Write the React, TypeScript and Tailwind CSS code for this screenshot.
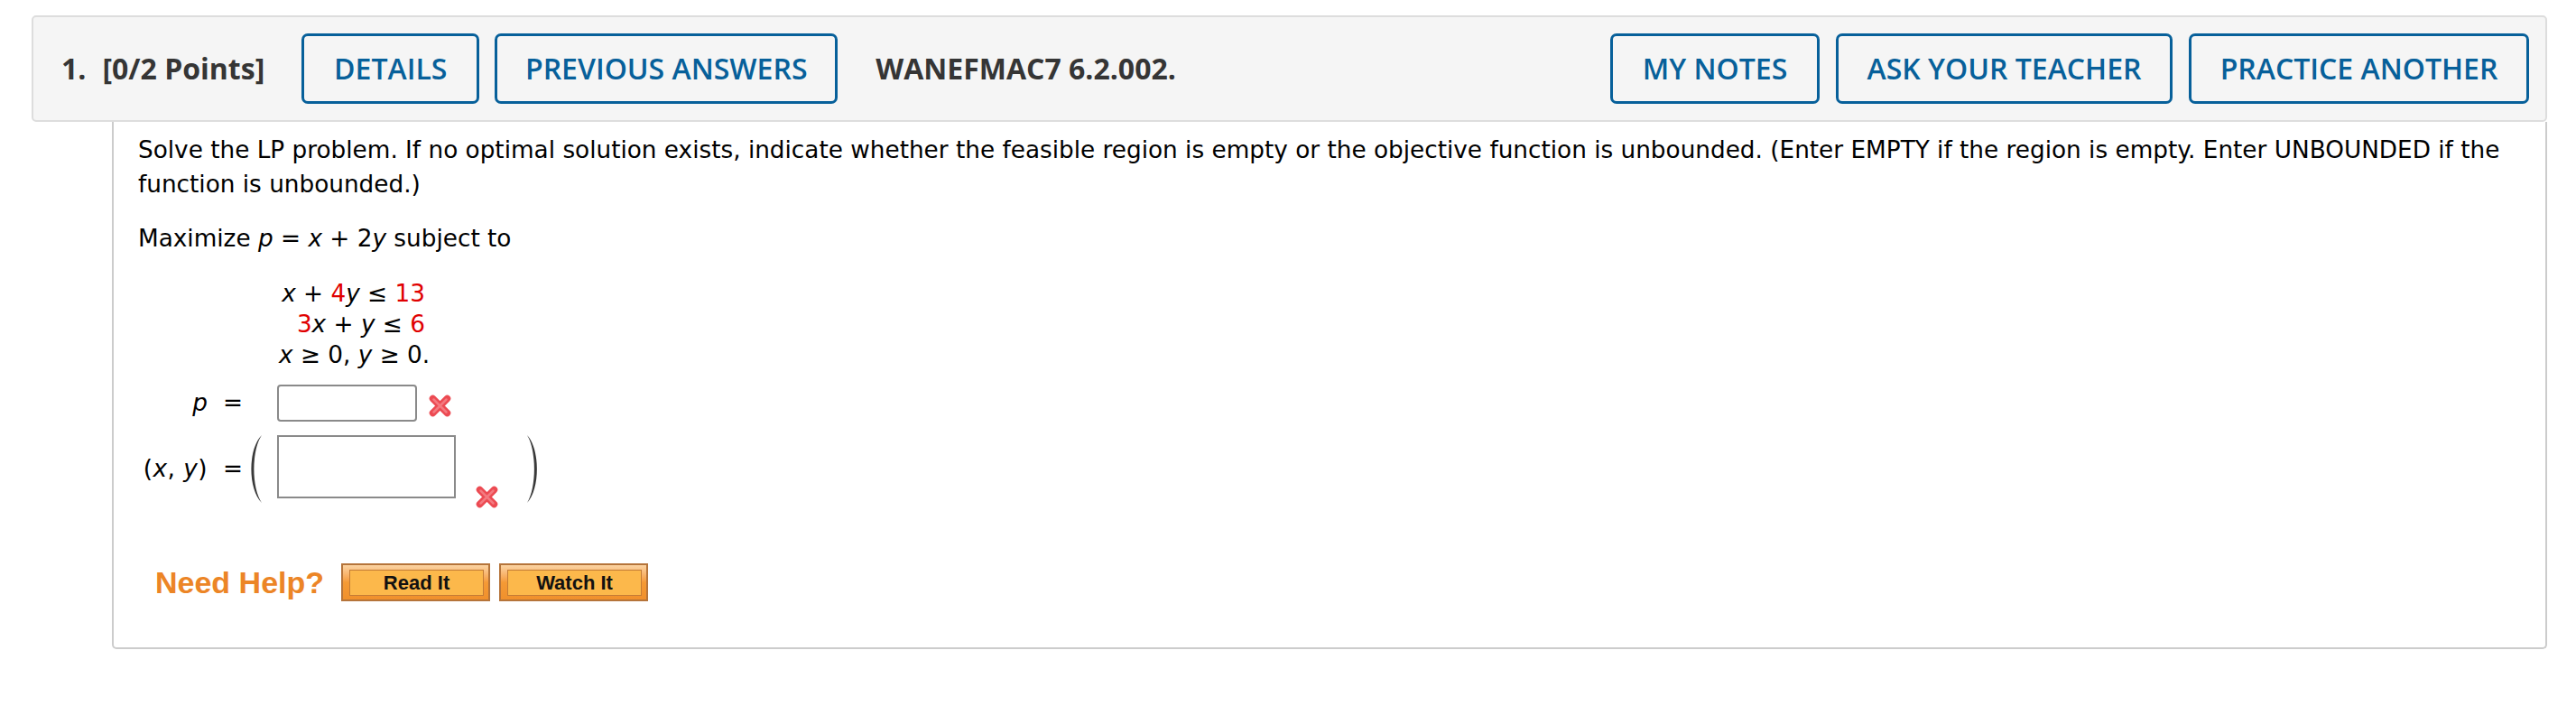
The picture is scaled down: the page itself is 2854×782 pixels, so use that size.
import React from "react";

function Btn({ w, className = "", children }: { w: string; className?: string; children: React.ReactNode }) {
  return (
    <div
      className={
        "h-[78px] flex items-center justify-center border-[3px] border-[#07609a] rounded-[7px] text-[#07609a] font-semibold whitespace-nowrap " +
        w +
        " " +
        className
      }
    >
      {children}
    </div>
  );
}

function RedX() {
  return (
    <svg width="25" height="25" viewBox="0 0 25 25" className="block">
      <g strokeLinecap="round">
        <path d="M4.5 4.5 L20.5 20.5 M20.5 4.5 L4.5 20.5" stroke="#ec4a52" strokeWidth="7.5" />
        <path d="M5.5 5.5 L19.5 19.5 M19.5 5.5 L5.5 19.5" stroke="#f47a80" strokeWidth="2.5" />
      </g>
    </svg>
  );
}

function HelpBtn({ children }: { children: React.ReactNode }) {
  return (
    <div className="w-[165px] h-[42px] border-2 border-[#b5743a] bg-gradient-to-b from-[#fbd3a1] via-[#f59a35] to-[#f0902c] pl-[7px] pr-[5px] pt-[5px] pb-[4px]">
      <div className="w-full h-full border border-[#c47c36] bg-[#fcb84b] flex items-center justify-center font-['Liberation_Sans',Arial,sans-serif] font-bold text-[22px] text-[#111] leading-none">
        {children}
      </div>
    </div>
  );
}

export default function App() {
  return (
    <div className="w-[2854px] h-[782px] bg-white pt-[17px] pl-[35px] pr-[32px]">
      <div className="flex items-center h-[118px] border-2 border-[#dddddd] rounded-[5px] bg-[#f5f5f5] pl-[31px] pr-[18px] font-['Open_Sans',sans-serif] text-[32px]">
        <span className="font-bold text-[#353535]">1.</span>
        <span className="font-bold text-[#353535] ml-[18px]">[0/2 Points]</span>
        <Btn w="w-[197px]" className="ml-[41px]">DETAILS</Btn>
        <Btn w="w-[380px]" className="ml-[17px]">PREVIOUS ANSWERS</Btn>
        <span className="ml-[42px] font-bold text-[#353535]">WANEFMAC7 6.2.002.</span>
        <div className="flex-1" />
        <Btn w="w-[232px]">MY NOTES</Btn>
        <Btn w="w-[373px]" className="ml-[18px]">ASK YOUR TEACHER</Btn>
        <Btn w="w-[377px]" className="ml-[18px]">PRACTICE ANOTHER</Btn>
      </div>

      <div className="ml-[89px] h-[584px] border-2 border-t-0 border-[#cccccc] rounded-b-[5px] pl-[27px] pt-[12px] font-['DejaVu_Sans',Verdana,sans-serif] text-[26.3px] text-black">
        <p className="leading-[38px] whitespace-nowrap">
          Solve the LP problem. If no optimal solution exists, indicate whether the feasible region is empty or the objective
          function is unbounded. (Enter EMPTY if the region is empty. Enter UNBOUNDED if the
          <br />
          function is unbounded.)
        </p>

        <p className="mt-[24px] leading-[34px] whitespace-nowrap">
          Maximize <i>p</i> = <i>x</i> + 2<i>y</i> subject to
        </p>

        <div className="mt-[27px] ml-[156px] w-[162px] leading-[34px] whitespace-nowrap">
          <div className="text-right">
            <i>x</i> + <span className="text-[#e00000]">4</span>
            <i>y</i> ≤ <span className="text-[#e00000]">13</span>
          </div>
          <div className="text-right">
            <span className="text-[#e00000]">3</span>
            <i>x</i> + <i>y</i> ≤ <span className="text-[#e00000]">6</span>
          </div>
          <div>
            <i>x</i> ≥ 0, <i>y</i> ≥ 0.
          </div>
        </div>

        <div className="mt-[16px] flex items-center h-[41px]">
          <div className="w-[77px] text-right leading-none">
            <i>p</i>
          </div>
          <div className="ml-[17px] w-[15px] leading-none">=</div>
          <div className="ml-[45px] w-[155px] h-[41px] border-2 border-[#8a8a8a] rounded-[4px] bg-white" />
          <div className="ml-[13px] mt-[6px]">
            <RedX />
          </div>
        </div>

        <div className="mt-[15px] flex items-start">
          <div className="h-[75px] flex items-center">
            <div className="w-[77px] text-right leading-none whitespace-nowrap tracking-[0.5px]">
              (<i>x</i>, <i>y</i>)
            </div>
            <div className="ml-[17px] w-[15px] leading-none">=</div>
          </div>
          <svg width="18" height="75" viewBox="0 0 18 75" className="ml-[11px] block">
            <path d="M17 0 C1.5 15 1.5 60 17 75 C5.5 58 5.5 17 17 0 Z" fill="#3a3a3a" />
          </svg>
          <div className="ml-[16px] w-[198px] h-[70px] border-2 border-[#8a8a8a] bg-white" />
          <div className="ml-[22px] mt-[56px]">
            <RedX />
          </div>
          <svg width="16" height="75" viewBox="0 0 16 75" className="ml-[31px] block">
            <path d="M1 0 C15.5 15 15.5 60 1 75 C11.5 58 11.5 17 1 0 Z" fill="#3a3a3a" />
          </svg>
        </div>

        <div className="mt-[61px] flex items-center">
          <span className="ml-[19px] font-['Liberation_Sans',Arial,sans-serif] font-bold text-[34px] text-[#ec8526] leading-none">
            Need Help?
          </span>
          <div className="ml-[19px]">
            <HelpBtn>Read It</HelpBtn>
          </div>
          <div className="ml-[10px]">
            <HelpBtn>Watch It</HelpBtn>
          </div>
        </div>
      </div>
    </div>
  );
}
